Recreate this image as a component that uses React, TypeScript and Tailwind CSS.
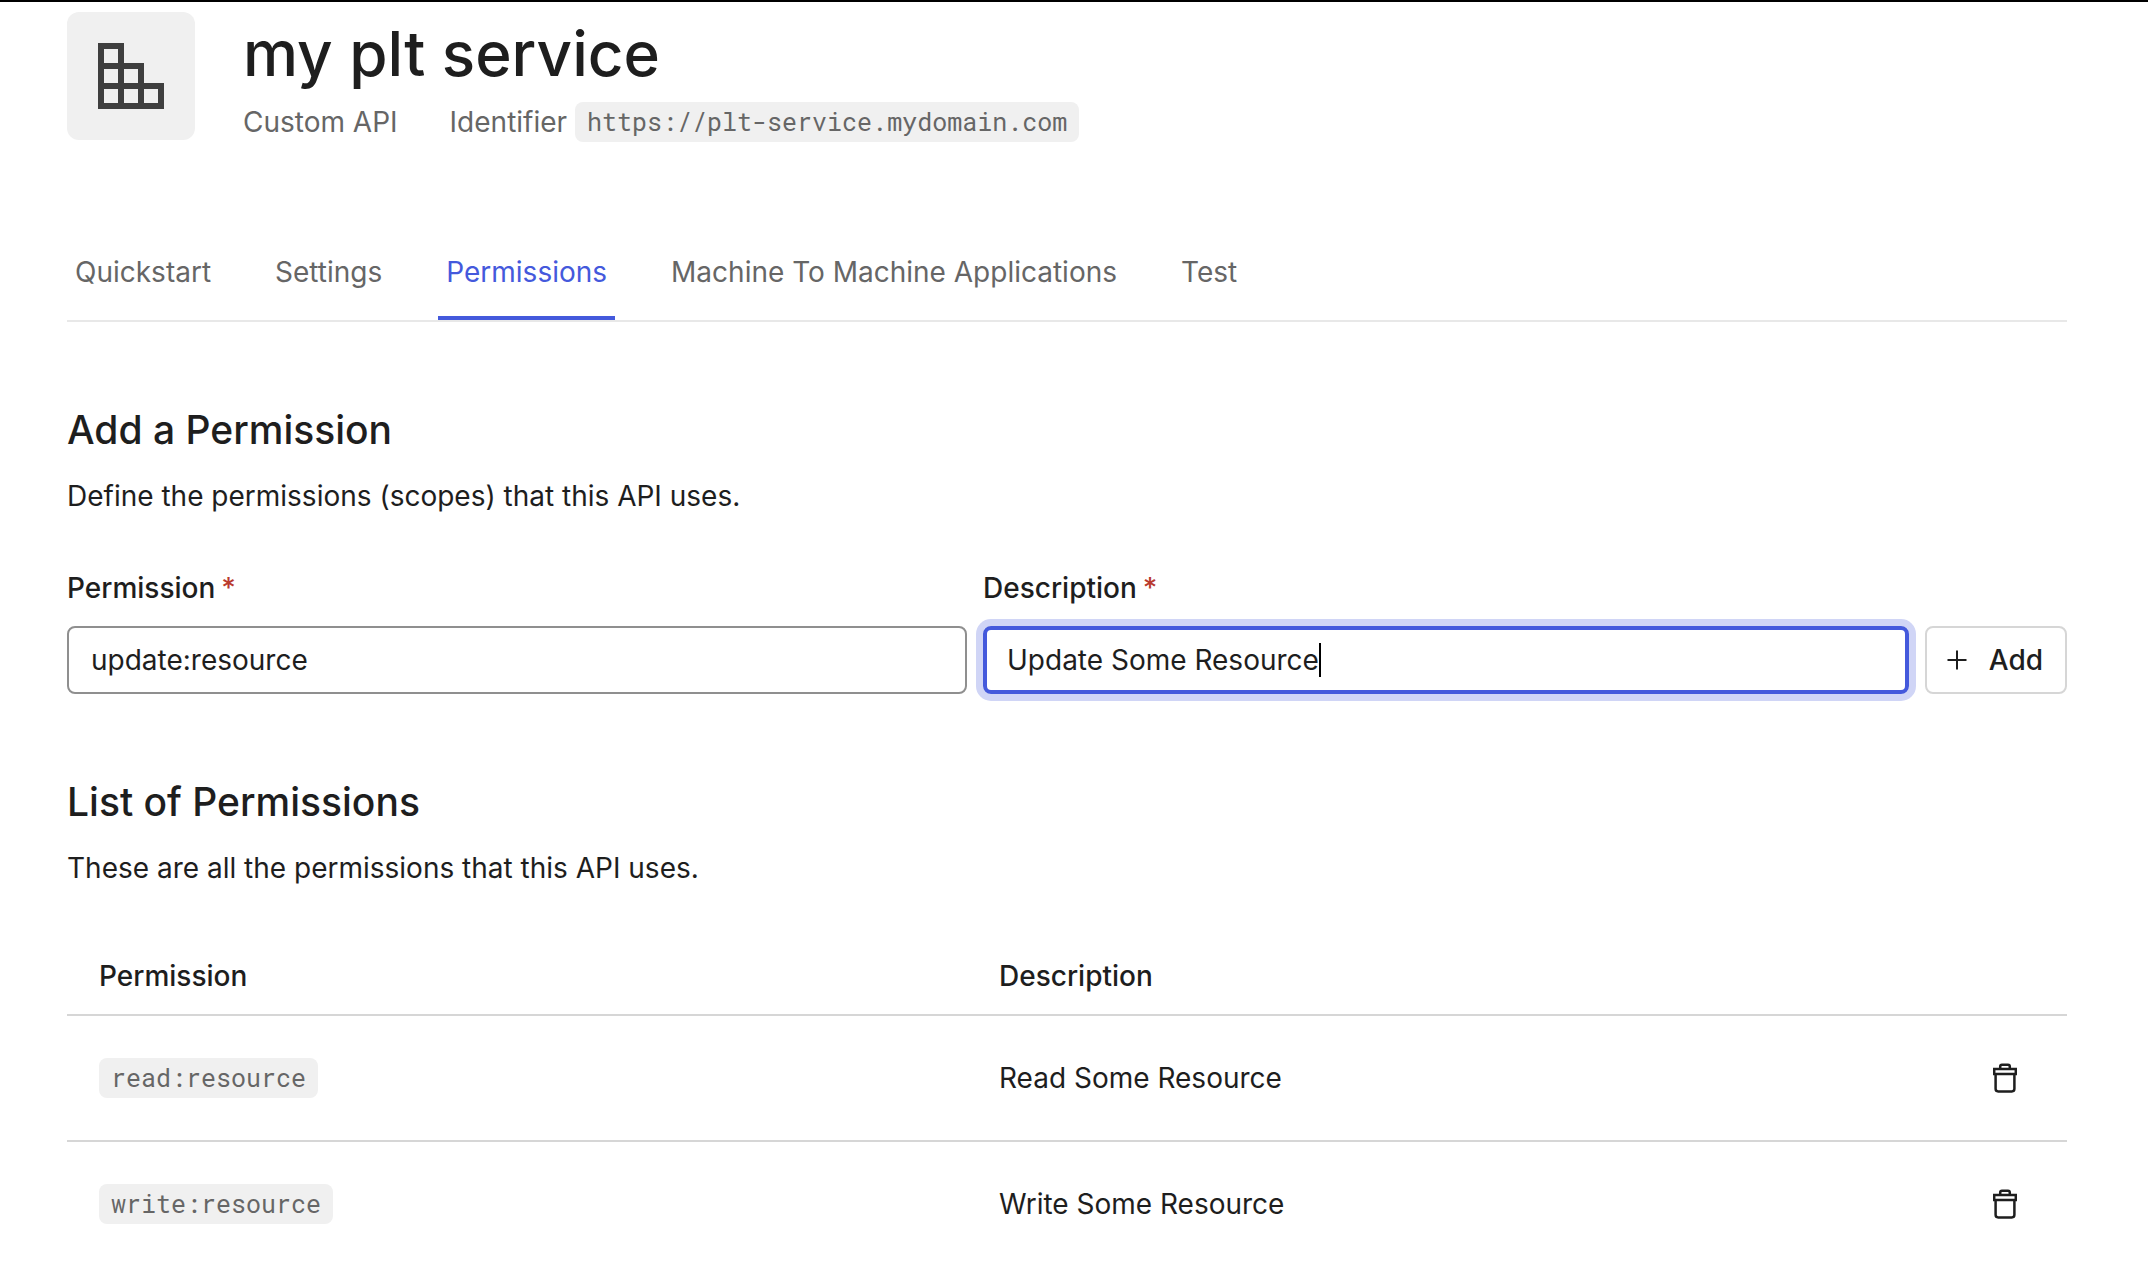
import { useState } from "react";

const tabs = ["Quickstart", "Settings", "Permissions", "Machine To Machine Applications", "Test"];

const permissions = [
  { scope: "read:resource", description: "Read Some Resource" },
  { scope: "write:resource", description: "Write Some Resource" },
];

function Code({ children }: { children: string }) {
  return (
    <code className="inline-block rounded-lg bg-[#f0f0f0] px-3 font-['Roboto_Mono','DejaVu_Sans_Mono',monospace] text-[25px] leading-10 text-[#666666]">
      {children}
    </code>
  );
}

function ApiIcon() {
  return (
    <svg width="66" height="66" viewBox="0 0 66 66" fill="none" stroke="#3f3f3f" strokeWidth="6" aria-hidden="true">
      <path d="M3 3H23V23H43V43H63V63H3ZM3 23H23V63M3 43H43V63" />
    </svg>
  );
}

function PlusIcon() {
  return (
    <svg width="20" height="20" viewBox="0 0 20 20" stroke="currentColor" strokeWidth="2" aria-hidden="true">
      <path d="M10 0.5V19.5M0.5 10H19.5" />
    </svg>
  );
}

function TrashIcon() {
  return (
    <svg width="24" height="30" viewBox="0 0 24 30" fill="none" stroke="currentColor" strokeWidth="2.5" aria-hidden="true">
      <path d="M7.2 5.5V3.6Q7.2 1.7 9 1.7H15Q16.8 1.7 16.8 3.6V5.5" />
      <path d="M1.2 6H22.8V11H1.2Z" />
      <path d="M2.6 11V25.8Q2.6 28.4 5.2 28.4H18.8Q21.4 28.4 21.4 25.8V11" />
    </svg>
  );
}

function FieldLabel({ htmlFor, children }: { htmlFor: string; children: string }) {
  return (
    <label htmlFor={htmlFor} className="flex gap-1.5 font-medium">
      {children}
      <span className="text-[#b93a2e]">*</span>
    </label>
  );
}

export default function App() {
  const [permission, setPermission] = useState("update:resource");
  const [description, setDescription] = useState("Update Some Resource");

  return (
    <main className="h-screen overflow-hidden border-t-2 border-black bg-white pt-[10px] pr-[81px] pl-[67px] font-['Inter',sans-serif] text-[28px] leading-10 text-[#1e1e1e]">
      <header className="flex items-start gap-12">
        <div className="flex size-32 shrink-0 items-center justify-center rounded-xl bg-[#f0f0f0]">
          <ApiIcon />
        </div>
        <div className="flex flex-col gap-[7px]">
          <h1 className="text-[62px] leading-[83px] font-medium">my plt service</h1>
          <div className="flex gap-[52px] text-[#666666]">
            <span>Custom API</span>
            <span className="flex gap-2">
              Identifier <Code>https://plt-service.mydomain.com</Code>
            </span>
          </div>
        </div>
      </header>

      <nav className="mt-[110px] flex gap-12 border-b-2 border-[#e8e8e8]">
        {tabs.map((tab) => (
          <a
            key={tab}
            href="#"
            aria-current={tab === "Permissions" ? "page" : undefined}
            className={
              tab === "Permissions"
                ? "border-b-4 border-[#4459dc] px-2 pb-6 text-[#4459dc]"
                : "border-b-4 border-transparent px-2 pb-6 text-[#666666]"
            }
          >
            {tab}
          </a>
        ))}
      </nav>

      <section className="mt-[84px]">
        <h2 className="text-[39px] leading-[48px] font-medium">Add a Permission</h2>
        <p className="mt-[22px]">Define the permissions (scopes) that this API uses.</p>
        <form className="mt-[52px] flex items-end gap-4" onSubmit={(e) => e.preventDefault()}>
          <div className="flex w-[45%] flex-col gap-[18px]">
            <FieldLabel htmlFor="permission">Permission</FieldLabel>
            <input
              id="permission"
              value={permission}
              onChange={(e) => setPermission(e.target.value)}
              className="h-[68px] w-full rounded-lg border-2 border-[#8f8f8f] px-[22px] outline-none"
            />
          </div>
          <div className="flex flex-1 flex-col gap-[18px]">
            <FieldLabel htmlFor="description">Description</FieldLabel>
            <div className="relative">
              <input
                id="description"
                value={description}
                onChange={(e) => setDescription(e.target.value)}
                className="block h-[68px] w-full rounded-lg border-4 border-[#4459dc] px-5 caret-transparent ring-7 ring-[#d0d5f6] outline-none"
              />
              <div className="pointer-events-none absolute inset-y-0 left-6 flex items-center" aria-hidden="true">
                <span className="invisible whitespace-pre">{description}</span>
                <span className="h-[34px] w-[2px] bg-black" />
              </div>
            </div>
          </div>
          <button type="submit" className="flex h-[68px] items-center gap-[22px] rounded-lg border-2 border-[#d6d6d6] pr-[22px] pl-5 font-medium">
            <PlusIcon />
            Add
          </button>
        </form>
      </section>

      <section className="mt-[84px]">
        <h2 className="text-[39px] leading-[48px] font-medium">List of Permissions</h2>
        <p className="mt-[22px]">These are all the permissions that this API uses.</p>
        <table className="mt-[68px] w-full table-fixed text-left">
          <thead>
            <tr className="border-b-2 border-[#d6d6d6]">
              <th className="w-[45%] px-8 pb-[18px] font-medium">Permission</th>
              <th className="px-8 pb-[18px] font-medium">Description</th>
              <th className="w-[142px]" aria-label="Actions" />
            </tr>
          </thead>
          <tbody>
            {permissions.map(({ scope, description: text }) => (
              <tr key={scope} className="h-[126px] border-b-2 border-[#d6d6d6]">
                <td className="px-8">
                  <div className="flex">
                    <Code>{scope}</Code>
                  </div>
                </td>
                <td className="px-8">{text}</td>
                <td className="pr-[50px]">
                  <button type="button" aria-label={`Delete ${scope}`} className="ml-auto block">
                    <TrashIcon />
                  </button>
                </td>
              </tr>
            ))}
          </tbody>
        </table>
      </section>
    </main>
  );
}
